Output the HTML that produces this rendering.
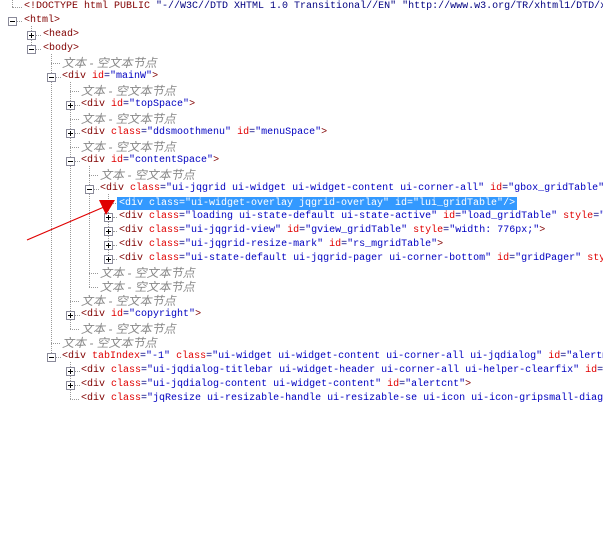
<!DOCTYPE html>
<html><head><meta charset="utf-8"><style>
body{margin:0;width:603px;height:555px;background:#fff;position:relative;overflow:hidden;font-family:"Liberation Mono","Noto Sans CJK SC",monospace;font-size:10px}
.r{position:absolute;height:14px;line-height:14px;white-space:nowrap;color:#000080}
.t{color:#800000}.a{color:#e00000}.v{color:#0000c0}
.c{color:#888;font-style:italic;font-size:12px;font-family:"Liberation Sans","Noto Sans CJK SC",sans-serif}
.b{position:absolute;width:7px;height:7px;border:1px solid #8a8a9a;background:#fff}
.b:before{content:"";position:absolute;left:1px;top:3px;width:5px;height:1px;background:#000}
.p:after{content:"";position:absolute;left:3px;top:1px;width:1px;height:5px;background:#000}
.vl{position:absolute;width:0;border-left:1px dotted #999}
.hl{position:absolute;height:0;border-top:1px dotted #999}
.sel{background:#3399ff;color:#fff}.sel span{color:#fff}
</style></head><body>
<!-- vertical lines -->
<div class="vl" style="left:12px;top:0;height:7px"></div>
<div class="vl" style="left:31px;top:26px;height:23px"></div>
<div class="vl" style="left:51px;top:54px;height:303px"></div>
<div class="vl" style="left:70px;top:82px;height:247px"></div>
<div class="vl" style="left:89px;top:166px;height:121px"></div>
<div class="vl" style="left:108px;top:194px;height:67px"></div>
<div class="vl" style="left:70px;top:362px;height:37px"></div>
<!-- horizontal stubs -->
<div class="hl" style="left:12px;top:7px;width:10px"></div>
<div class="hl" style="left:17px;top:21px;width:5px"></div>
<div class="hl" style="left:36px;top:35px;width:5px"></div>
<div class="hl" style="left:36px;top:49px;width:5px"></div>
<div class="hl" style="left:51px;top:63px;width:9px"></div>
<div class="hl" style="left:56px;top:77px;width:5px"></div>
<div class="hl" style="left:70px;top:91px;width:9px"></div>
<div class="hl" style="left:75px;top:105px;width:5px"></div>
<div class="hl" style="left:70px;top:119px;width:9px"></div>
<div class="hl" style="left:75px;top:133px;width:5px"></div>
<div class="hl" style="left:70px;top:147px;width:9px"></div>
<div class="hl" style="left:75px;top:161px;width:5px"></div>
<div class="hl" style="left:89px;top:175px;width:9px"></div>
<div class="hl" style="left:94px;top:189px;width:5px"></div>
<div class="hl" style="left:108px;top:203px;width:8px"></div>
<div class="hl" style="left:113px;top:217px;width:4px"></div>
<div class="hl" style="left:113px;top:231px;width:4px"></div>
<div class="hl" style="left:113px;top:245px;width:4px"></div>
<div class="hl" style="left:113px;top:259px;width:4px"></div>
<div class="hl" style="left:89px;top:273px;width:9px"></div>
<div class="hl" style="left:89px;top:287px;width:9px"></div>
<div class="hl" style="left:70px;top:301px;width:9px"></div>
<div class="hl" style="left:75px;top:315px;width:5px"></div>
<div class="hl" style="left:70px;top:329px;width:9px"></div>
<div class="hl" style="left:51px;top:343px;width:9px"></div>
<div class="hl" style="left:56px;top:357px;width:5px"></div>
<div class="hl" style="left:75px;top:371px;width:5px"></div>
<div class="hl" style="left:75px;top:385px;width:5px"></div>
<div class="hl" style="left:70px;top:399px;width:9px"></div>
<!-- boxes -->
<div class="b" style="left:8px;top:17px"></div>
<div class="b p" style="left:27px;top:31px"></div>
<div class="b" style="left:27px;top:45px"></div>
<div class="b" style="left:47px;top:73px"></div>
<div class="b p" style="left:66px;top:101px"></div>
<div class="b p" style="left:66px;top:129px"></div>
<div class="b" style="left:66px;top:157px"></div>
<div class="b" style="left:85px;top:185px"></div>
<div class="b p" style="left:104px;top:213px"></div>
<div class="b p" style="left:104px;top:227px"></div>
<div class="b p" style="left:104px;top:241px"></div>
<div class="b p" style="left:104px;top:255px"></div>
<div class="b p" style="left:66px;top:311px"></div>
<div class="b" style="left:47px;top:353px"></div>
<div class="b p" style="left:66px;top:367px"></div>
<div class="b p" style="left:66px;top:381px"></div>
<!-- rows -->
<div class="r" style="left:24px;top:0"><span class="t">&lt;!DOCTYPE html PUBLIC</span> "-//W3C//DTD XHTML 1.0 Transitional//EN" "http://www.w3.org/TR/xhtml1/DTD/xhtml1-transitional.dtd"&gt;</div>
<div class="r" style="left:24px;top:14px"><span class="t">&lt;html&gt;</span></div>
<div class="r" style="left:43px;top:28px"><span class="t">&lt;head&gt;</span></div>
<div class="r" style="left:43px;top:42px"><span class="t">&lt;body&gt;</span></div>
<div class="r c" style="left:62px;top:56px">文本 - 空文本节点</div>
<div class="r" style="left:62px;top:70px"><span class="t">&lt;div </span><span class="a">id</span>=<span class="v">"mainW"</span><span class="t">&gt;</span></div>
<div class="r c" style="left:81px;top:84px">文本 - 空文本节点</div>
<div class="r" style="left:81px;top:98px"><span class="t">&lt;div </span><span class="a">id</span>=<span class="v">"topSpace"</span><span class="t">&gt;</span></div>
<div class="r c" style="left:81px;top:112px">文本 - 空文本节点</div>
<div class="r" style="left:81px;top:126px"><span class="t">&lt;div </span><span class="a">class</span>=<span class="v">"ddsmoothmenu"</span> <span class="a">id</span>=<span class="v">"menuSpace"</span><span class="t">&gt;</span></div>
<div class="r c" style="left:81px;top:140px">文本 - 空文本节点</div>
<div class="r" style="left:81px;top:154px"><span class="t">&lt;div </span><span class="a">id</span>=<span class="v">"contentSpace"</span><span class="t">&gt;</span></div>
<div class="r c" style="left:100px;top:168px">文本 - 空文本节点</div>
<div class="r" style="left:100px;top:182px"><span class="t">&lt;div </span><span class="a">class</span>=<span class="v">"ui-jqgrid ui-widget ui-widget-content ui-corner-all"</span> <span class="a">id</span>=<span class="v">"gbox_gridTable"</span><span class="t">&gt;</span></div>
<div class="r sel" style="left:117px;top:197px;height:13px;line-height:13px;padding:0 2px">&lt;div class="ui-widget-overlay jqgrid-overlay" id="lui_gridTable"/&gt;</div>
<div class="r" style="left:119px;top:210px"><span class="t">&lt;div </span><span class="a">class</span>=<span class="v">"loading ui-state-default ui-state-active"</span> <span class="a">id</span>=<span class="v">"load_gridTable"</span> <span class="a">style</span>=<span class="v">"display:none"</span></div>
<div class="r" style="left:119px;top:224px"><span class="t">&lt;div </span><span class="a">class</span>=<span class="v">"ui-jqgrid-view"</span> <span class="a">id</span>=<span class="v">"gview_gridTable"</span> <span class="a">style</span>=<span class="v">"width: 776px;"</span><span class="t">&gt;</span></div>
<div class="r" style="left:119px;top:238px"><span class="t">&lt;div </span><span class="a">class</span>=<span class="v">"ui-jqgrid-resize-mark"</span> <span class="a">id</span>=<span class="v">"rs_mgridTable"</span><span class="t">&gt;</span></div>
<div class="r" style="left:119px;top:252px"><span class="t">&lt;div </span><span class="a">class</span>=<span class="v">"ui-state-default ui-jqgrid-pager ui-corner-bottom"</span> <span class="a">id</span>=<span class="v">"gridPager"</span> <span class="a">style</span>=<span class="v">"width"</span></div>
<div class="r c" style="left:100px;top:266px">文本 - 空文本节点</div>
<div class="r c" style="left:100px;top:280px">文本 - 空文本节点</div>
<div class="r c" style="left:81px;top:294px">文本 - 空文本节点</div>
<div class="r" style="left:81px;top:308px"><span class="t">&lt;div </span><span class="a">id</span>=<span class="v">"copyright"</span><span class="t">&gt;</span></div>
<div class="r c" style="left:81px;top:322px">文本 - 空文本节点</div>
<div class="r c" style="left:62px;top:336px">文本 - 空文本节点</div>
<div class="r" style="left:62px;top:350px"><span class="t">&lt;div </span><span class="a">tabIndex</span>=<span class="v">"-1"</span> <span class="a">class</span>=<span class="v">"ui-widget ui-widget-content ui-corner-all ui-jqdialog"</span> <span class="a">id</span>=<span class="v">"alertmod"</span></div>
<div class="r" style="left:81px;top:364px"><span class="t">&lt;div </span><span class="a">class</span>=<span class="v">"ui-jqdialog-titlebar ui-widget-header ui-corner-all ui-helper-clearfix"</span> <span class="a">id</span>=<span class="v">"alerthd"</span></div>
<div class="r" style="left:81px;top:378px"><span class="t">&lt;div </span><span class="a">class</span>=<span class="v">"ui-jqdialog-content ui-widget-content"</span> <span class="a">id</span>=<span class="v">"alertcnt"</span><span class="t">&gt;</span></div>
<div class="r" style="left:81px;top:392px"><span class="t">&lt;div </span><span class="a">class</span>=<span class="v">"jqResize ui-resizable-handle ui-resizable-se ui-icon ui-icon-gripsmall-diagonal-se"</span></div>
<!-- arrow -->
<svg style="position:absolute;left:0;top:0" width="603" height="555">
<line x1="27" y1="240" x2="104" y2="207" stroke="#e00000" stroke-width="1.2"/>
<polygon points="115,200 99,200 106,215" fill="#e00000"/>
</svg>
</body></html>
